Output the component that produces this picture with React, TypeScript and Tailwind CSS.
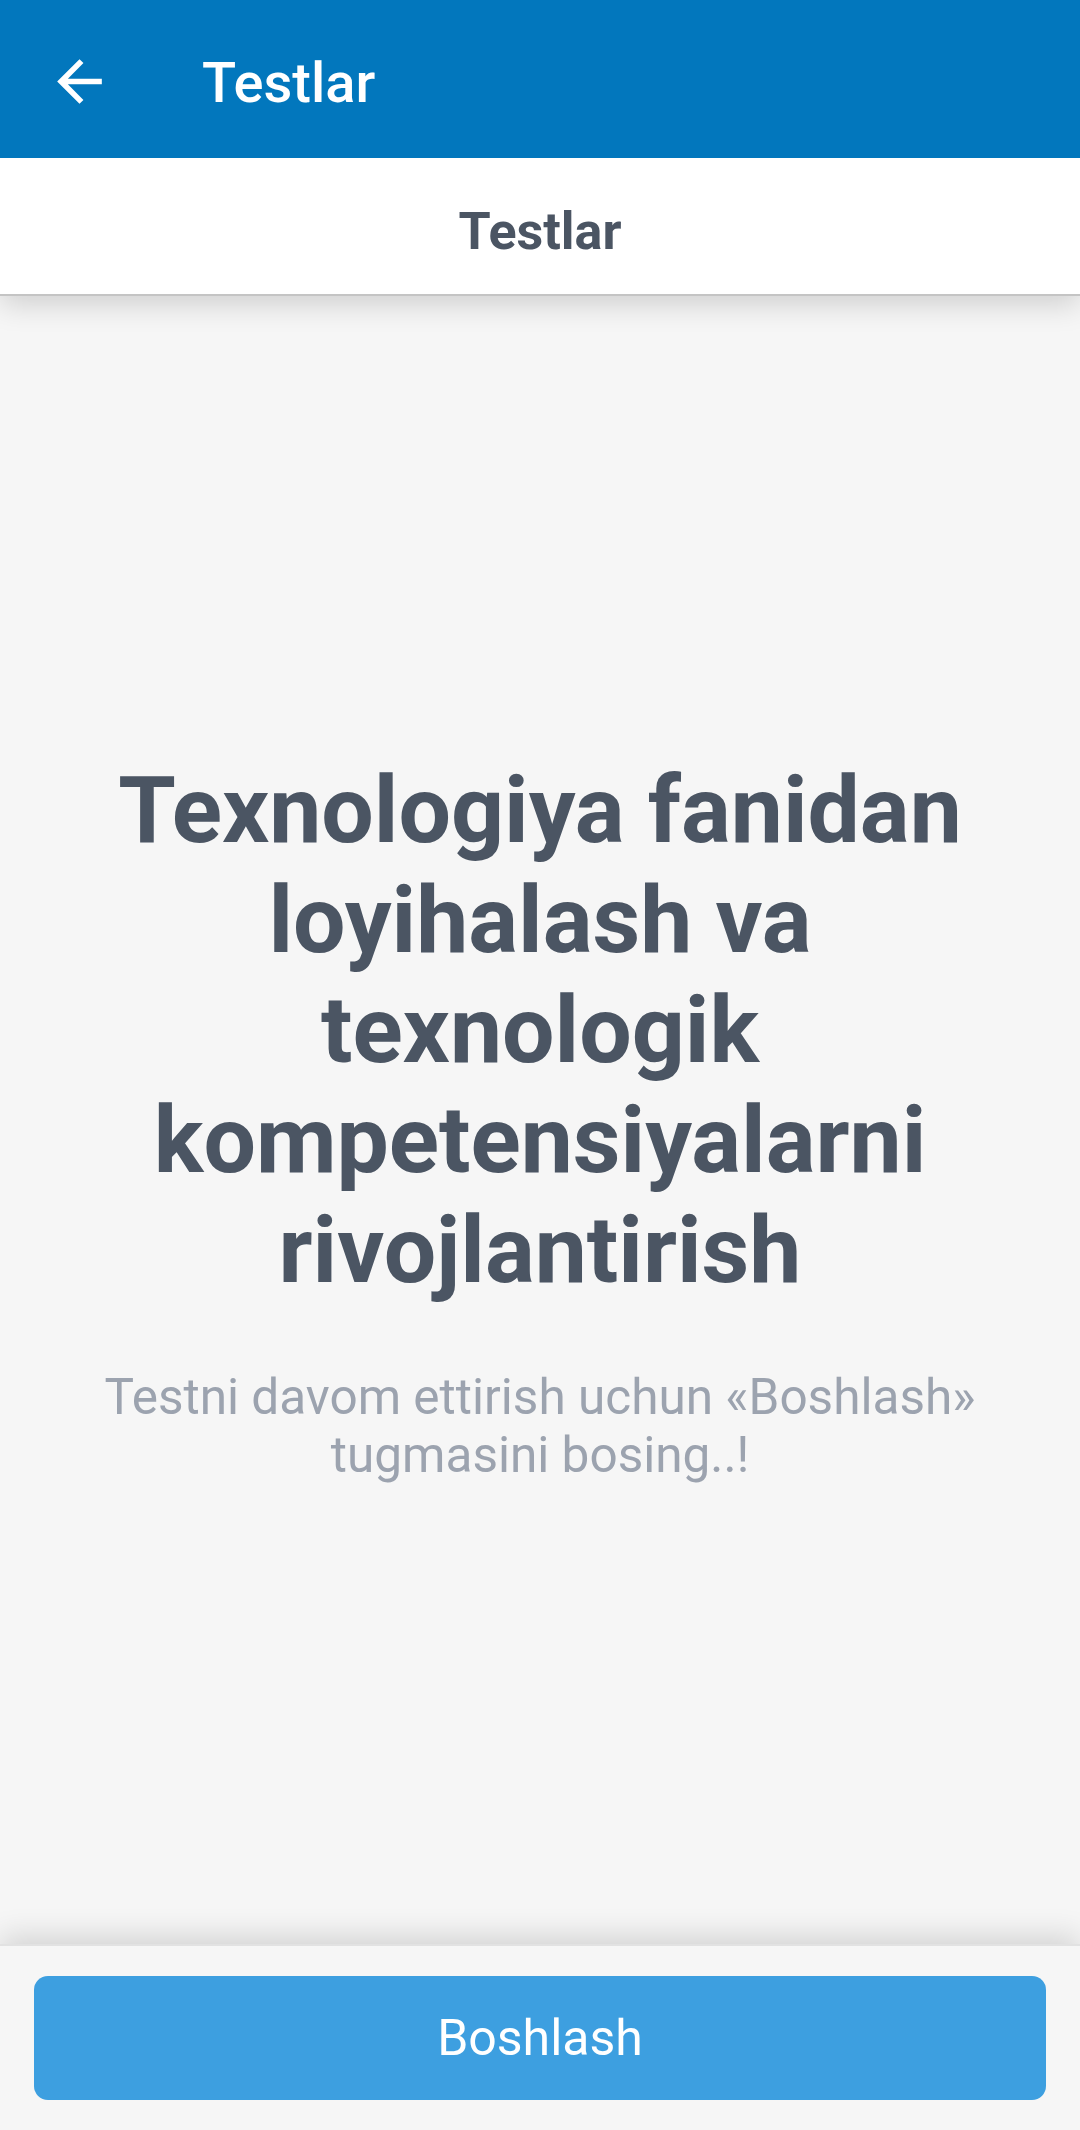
import React from 'react';

const BackArrow: React.FC = () => (
  <svg viewBox="0 0 24 24" className="w-[67px] h-[67px] mt-[4px] shrink-0" fill="#ffffff">
    <path d="M20 11H7.83l5.59-5.59L12 4l-8 8 8 8 1.41-1.41L7.83 13H20v-2z" />
  </svg>
);

const App: React.FC = () => {
  return (
    <div
      className="flex flex-col h-[2130px] w-full bg-[#f6f6f6] overflow-hidden"
      style={{ fontFamily: 'Roboto, "Noto Sans", sans-serif' }}
    >
      {/* App bar */}
      <header className="relative z-20 flex items-center h-[158px] pl-[46px] bg-[#0277bd] shrink-0">
        <BackArrow />
        <h1 className="ml-[89px] mt-[8px] text-[56px] font-medium text-white leading-none">Testlar</h1>
      </header>

      {/* Section title */}
      <div className="relative z-10 flex items-center justify-center h-[138px] pt-[12px] bg-white border-b-2 border-[#c4c4c4] shadow-[0_8px_28px_rgba(0,0,0,0.16)] shrink-0">
        <h2 className="text-[52px] font-bold text-[#4b5563] leading-none">Testlar</h2>
      </div>

      {/* Content */}
      <main className="flex-1 flex flex-col items-center justify-center px-[66px] text-center">
        <h3 className="text-[93px] leading-[110px] font-bold text-[#4b5563]">
          Texnologiya fanidan loyihalash va texnologik kompetensiyalarni rivojlantirish
        </h3>
        <p className="mt-[63px] text-[49.5px] leading-[57.6px] text-[#9ca3af]">
          Testni davom ettirish uchun «Boshlash» tugmasini bosing..!
        </p>
      </main>

      {/* Bottom action */}
      <footer className="relative z-10 px-[34px] py-[30px] bg-[#f6f6f6] border-t-2 border-[#e2e2e2] shadow-[0_-8px_28px_rgba(0,0,0,0.14)] shrink-0">
        <button className="w-full h-[124px] rounded-[14px] bg-[#3d9fe0] text-white text-[50px] leading-none">
          Boshlash
        </button>
      </footer>
    </div>
  );
};

export default App;
